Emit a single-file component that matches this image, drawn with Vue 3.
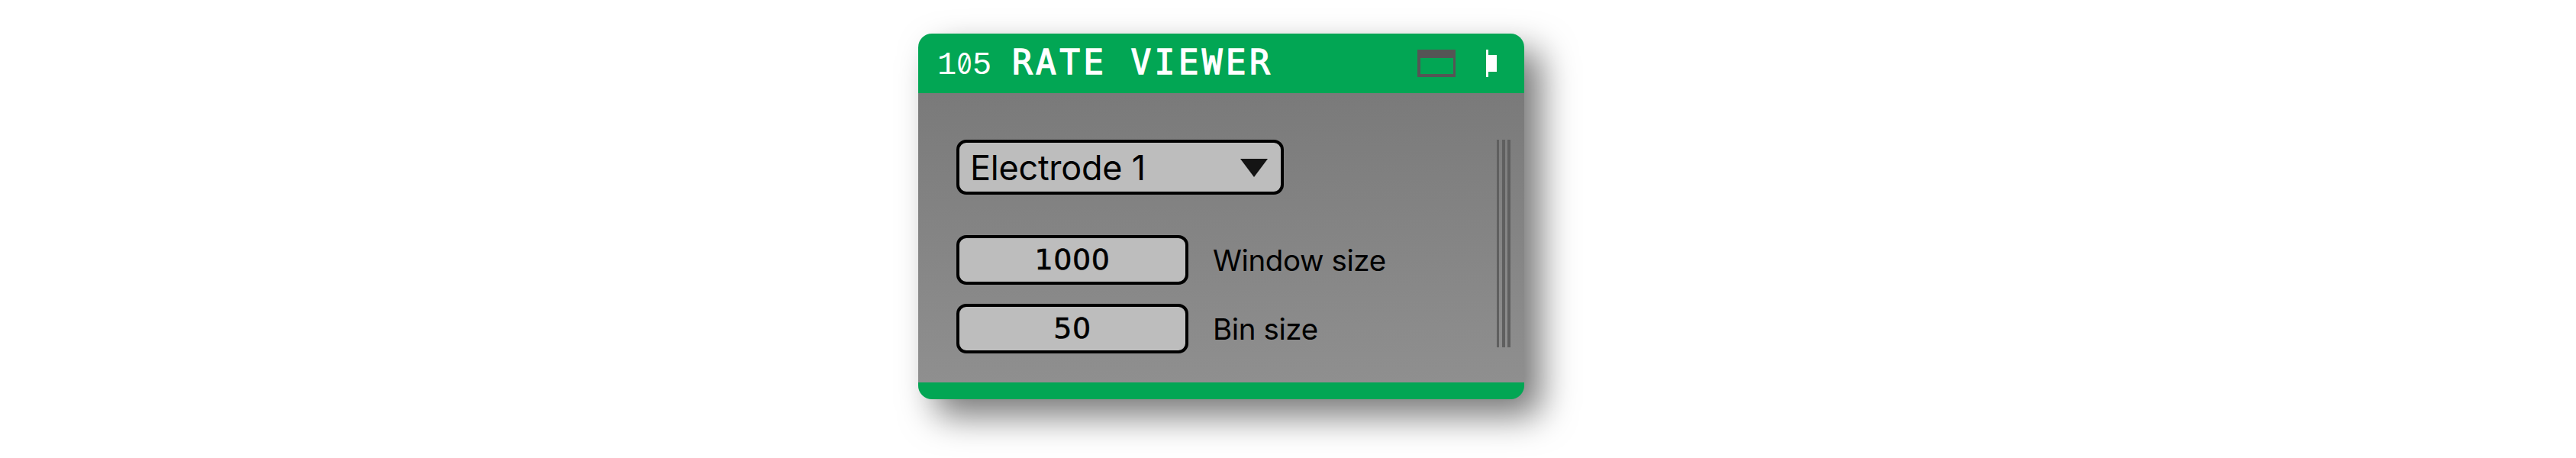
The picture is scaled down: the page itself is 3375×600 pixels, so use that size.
<script setup>
import { ref } from 'vue'

const nodeId = '105'
const title = 'RATE VIEWER'
const electrode = ref('Electrode 1')
const fields = ref([
  { label: 'Window size', value: '1000' },
  { label: 'Bin size', value: '50' },
])
</script>

<template>
  <main class="stage">
    <section class="panel">
      <header class="header">
        <span class="node-id"><span v-for="(d, i) in nodeId" :key="i" class="digit" :class="{ zero: d === '0' }">{{ d }}</span></span>
        <h1 class="title">{{ title }}</h1>
        <svg class="window-icon" width="50" height="36" viewBox="0 0 50 36" shape-rendering="crispEdges">
          <path fill="#555" fill-rule="evenodd" d="M0 0H50V36H0ZM4 11V32H47V11Z" />
        </svg>
        <svg class="dock-icon" width="14" height="36" viewBox="0 0 14 36" shape-rendering="crispEdges">
          <path fill="#fff" d="M0 0H3V7H14V29H3V36H0Z" />
        </svg>
      </header>
      <div class="body">
        <div class="controls">
          <div class="select">
            <span class="select-text">{{ electrode }}</span>
            <svg class="arrow" width="36" height="24" viewBox="0 0 36 24"><path fill="#141414" d="M0 0H36L18 24Z" /></svg>
          </div>
          <div class="fields">
            <div v-for="f in fields" :key="f.label" class="field">
              <div class="input"><span class="value">{{ f.value }}</span></div>
              <span class="label">{{ f.label }}</span>
            </div>
          </div>
        </div>
        <div class="grip"><i /><i /><i /></div>
      </div>
      <footer class="footer" />
    </section>
  </main>
</template>

<style>
body {
  background: #fff;
}
</style>

<style scoped>
.stage {
  box-sizing: border-box;
  height: 600px;
  padding: 44px 0 0 1203px;
  overflow: hidden;
}
.panel {
  width: 794px;
  height: 479px;
  display: flex;
  flex-direction: column;
  border-radius: 18px;
  background: #02a654;
  box-shadow: 22px 22px 46px rgba(0, 0, 0, 0.53);
}
.header {
  box-sizing: border-box;
  height: 78px;
  display: flex;
  align-items: center;
  padding: 0 36px 0 26px;
  color: #fff;
}
.node-id {
  display: flex;
  align-items: baseline;
  width: 97px;
  padding-top: 3px;
  font: 42px/50px 'Liberation Mono', monospace;
}
.digit {
  width: 23px;
  display: flex;
  justify-content: center;
}
.zero {
  font-family: Inter, sans-serif;
  font-size: 38.5px;
  font-weight: 400;
  font-feature-settings: 'zero' 1;
  transform: scaleX(0.83);
}
.title {
  margin: 0;
  flex: 1;
  padding-bottom: 3px;
  font: 400 44.5px/54px 'DejaVu Sans Mono', monospace;
  letter-spacing: 4.3px;
  white-space: pre;
  -webkit-text-stroke: 1.3px #fff;
}
.window-icon {
  margin-right: 40px;
}
.body {
  box-sizing: border-box;
  height: 379px;
  display: flex;
  justify-content: space-between;
  padding: 61px 18px 0 50px;
  background: linear-gradient(#7a7a7a, #8f8f8f);
  color: #000;
}
.select {
  box-sizing: border-box;
  width: 429px;
  height: 72px;
  display: flex;
  align-items: center;
  justify-content: space-between;
  padding: 0 17px 0 14px;
  border: 4px solid #000;
  border-radius: 13px;
  background: #bdbdbd;
}
.select-text {
  margin-top: 1px;
  font: 400 45px/56px Inter, sans-serif;
  letter-spacing: -0.25px;
  white-space: nowrap;
}
.arrow {
  margin-top: 2px;
}
.fields {
  margin-top: 53px;
  display: flex;
  flex-direction: column;
  gap: 25px;
}
.field {
  display: flex;
  align-items: center;
  gap: 32px;
}
.input {
  box-sizing: border-box;
  width: 304px;
  height: 65px;
  display: flex;
  align-items: center;
  justify-content: center;
  border: 4px solid #000;
  border-radius: 13px;
  background: #bdbdbd;
}
.value {
  margin-top: -1px;
  font: 400 38px/44px 'DejaVu Sans', sans-serif;
  letter-spacing: 0.6px;
  -webkit-text-stroke: 0.6px #000;
}
.label {
  margin-top: 1px;
  font: 400 38.5px/48px Inter, sans-serif;
  letter-spacing: -0.4px;
  white-space: nowrap;
}
.grip {
  width: 18px;
  height: 272px;
  display: flex;
  justify-content: space-between;
}
.grip i {
  width: 4px;
  background: #5f5f5f;
}
.grip i:first-child {
  width: 3px;
  margin-right: 1px;
}
.footer {
  height: 22px;
}
</style>
